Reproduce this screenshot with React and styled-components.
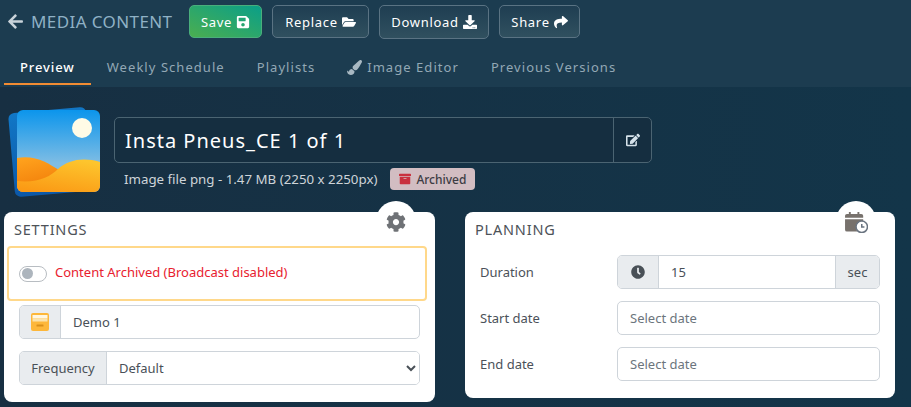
import React from 'react'
import styled, { createGlobalStyle } from 'styled-components'
import {
  FaArrowLeft, FaSave, FaFolderOpen, FaDownload, FaShare, FaPaintBrush,
  FaEdit, FaArchive, FaCog, FaClock,
} from 'react-icons/fa'

const Global = createGlobalStyle`
  html, body { margin: 0; padding: 0; height: 100%; }
  body { font-family: "Noto Sans", "Open Sans", sans-serif; background: #15324a; overflow: hidden; }
  * { box-sizing: border-box; }
`

const Page = styled.div`
  width: 911px;
  height: 407px;
  display: flex;
  flex-direction: column;
  background: linear-gradient(90deg, #172f42 0%, #133549 100%);
`

const Header = styled.header`
  height: 87px;
  flex: none;
  background: #1c3c50;
  display: flex;
  flex-direction: column;
`

const Toolbar = styled.div`
  display: flex;
  align-items: flex-start;
  padding: 5px 0 0 7px;
  height: 39px;
`

const BackTitle = styled.div`
  display: flex;
  align-items: center;
  gap: 7px;
  width: 182px;
  height: 33px;
  color: #8fb1c5;
  font-size: 17px;
  letter-spacing: 0.4px;
  white-space: nowrap;
  svg { color: #c9d3da; font-size: 17px; }
`

const ActionButton = styled.button`
  height: ${p => p.$h || 33}px;
  width: ${p => p.$w}px;
  margin-right: 10px;
  display: flex;
  align-items: center;
  justify-content: center;
  gap: 4px;
  border-radius: 5px;
  border: 1px solid ${p => (p.$primary ? '#4aae7c' : '#5a7383')};
  background: ${p => (p.$primary
    ? 'linear-gradient(to top right, #4bae50, #0a9f88)'
    : 'linear-gradient(180deg, #1f3e52, #30505f)')};
  color: #fff;
  font-family: inherit;
  font-size: 13px;
  font-weight: 400;
  letter-spacing: 0.7px;
  padding: 0;
  svg { font-size: 14px; }
`

const Tabs = styled.nav`
  display: flex;
  margin-top: 11px;
  padding-left: 4px;
`

const Tab = styled.div`
  height: 35px;
  padding: 1px 16px 0;
  display: flex;
  align-items: center;
  gap: 5px;
  color: ${p => (p.$active ? '#fff' : '#93a8b5')};
  font-size: 13px;
  font-weight: ${p => (p.$active ? 500 : 400)};
  letter-spacing: ${p => (p.$active ? 0.9 : 1.05)}px;
  border-bottom: 2px solid ${p => (p.$active ? '#f28c33' : 'transparent')};
  svg { font-size: 15px; color: #a8b8c2; }
`

const Info = styled.section`
  display: flex;
  flex: none;
  padding: 18px 0 0 8px;
  height: 125px;
`

const Thumb = styled.svg`
  width: 94px;
  height: 94px;
  flex: none;
`

const InfoText = styled.div`
  margin: 12px 0 0 12px;
`

const TitleBox = styled.div`
  width: 538px;
  height: 46px;
  display: flex;
  border: 1px solid #4b6472;
  border-radius: 5px;
  background: #152e40;
`

const TitleText = styled.div`
  flex: 1;
  padding-left: 10px;
  display: flex;
  align-items: center;
  color: #fff;
  font-size: 20px;
  letter-spacing: 1px;
`

const TitleEdit = styled.div`
  width: 38px;
  border-left: 1px solid #4b6472;
  display: flex;
  align-items: center;
  justify-content: center;
  color: #d5e2ea;
  font-size: 14px;
`

const Meta = styled.div`
  display: flex;
  align-items: center;
  margin-top: 5px;
  padding-left: 10px;
  color: #ced4d9;
  font-size: 13.3px;
`

const Badge = styled.span`
  margin-left: 13px;
  width: 85px;
  height: 22px;
  display: flex;
  align-items: center;
  justify-content: center;
  gap: 5px;
  background: #d2bdc2;
  border-radius: 4px;
  color: #3c3c44;
  font-size: 12px;
  font-weight: 500;
  svg { color: #c9303e; font-size: 12px; }
`

const Cards = styled.section`
  display: flex;
  align-items: flex-start;
  gap: 30px;
  padding-left: 4px;
`

const Card = styled.div`
  position: relative;
  flex: none;
  width: ${p => p.$w}px;
  height: ${p => p.$h}px;
  background: #fff;
  border-radius: 8px;
  padding: 8px 15px 0;
  color: #474f5a;
`

const CornerBadge = styled.div`
  position: absolute;
  top: -11px;
  right: 19px;
  width: 40px;
  height: 40px;
  padding-top: 2px;
  border-radius: 50%;
  background: #fff;
  display: flex;
  align-items: center;
  justify-content: center;
  color: #6f7276;
  font-size: 20px;
`

const CardTitle = styled.h2`
  margin: 0 0 2px -5px;
  font-size: 14.5px;
  font-weight: 400;
  letter-spacing: 0.8px;
  line-height: 18px;
  color: #4d5258;
`

const Alert = styled.div`
  margin: 8px -7px 4px -12px;
  height: 55px;
  display: flex;
  align-items: center;
  gap: 8px;
  padding-left: 10px;
  border: 2px solid #ffd88a;
  border-radius: 4px;
  color: #e8212f;
  font-size: 13px;
`

const AlertText = styled.span`
  padding-bottom: 3px;
`

const Toggle = styled.span`
  width: 28px;
  height: 16px;
  padding: 2px;
  border: 1px solid #b8bdc2;
  border-radius: 8px;
  background: #fff;
  display: flex;
  align-items: center;
  &::before {
    content: "";
    width: 11px;
    height: 11px;
    border-radius: 50%;
    background: #adb5bd;
  }
`

const Group = styled.div`
  display: flex;
  height: 34px;
  margin-bottom: ${p => p.$mb || 0}px;
  border: 1px solid #ced4da;
  border-radius: 5px;
  overflow: hidden;
  font-size: 13px;
  color: #495057;
`

const Addon = styled.div`
  flex: none;
  width: ${p => p.$w}px;
  display: flex;
  align-items: center;
  justify-content: center;
  background: #e9ecef;
  border-${p => p.$side || 'right'}: 1px solid #ced4da;
  color: #495057;
  font-size: ${p => (p.$icon ? 14 : 13)}px;
`

const Value = styled.div`
  flex: 1;
  display: flex;
  align-items: center;
  padding-left: 12px;
`

const Select = styled.select`
  flex: 1;
  border: 0;
  background: #fff;
  padding-left: 8px;
  color: #495057;
  font-family: inherit;
  font-size: 13px;
  outline: none;
`

const Rows = styled.div`
  display: flex;
  flex-direction: column;
  gap: 12px;
  padding-top: 15px;
`

const Row = styled.div`
  display: flex;
  align-items: center;
`

const RowLabel = styled.label`
  width: 137px;
  flex: none;
  font-size: 13px;
  color: #4b5159;
`

const Field = styled.div`
  flex: 1;
  min-width: 0;
`

const DateInput = styled.input`
  display: block;
  width: 100%;
  height: 34px;
  border: 1px solid #ced4da;
  border-radius: 5px;
  padding: 0 12px;
  font-family: inherit;
  font-size: 13px;
  outline: none;
  &::placeholder { color: #6c757d; opacity: 1; }
`

const StackedImage = () => (
  <Thumb viewBox="0 0 94 94">
    <defs>
      <linearGradient id="sky" x1="0" y1="0" x2="0" y2="1">
        <stop offset="0" stopColor="#0b95ec" />
        <stop offset="0.65" stopColor="#7fbde4" />
      </linearGradient>
      <linearGradient id="back" x1="0" y1="0" x2="0" y2="1">
        <stop offset="0" stopColor="#1177c6" />
        <stop offset="1" stopColor="#0c58a8" />
      </linearGradient>
      <linearGradient id="duneBack" x1="0.3" y1="0" x2="0.6" y2="1">
        <stop offset="0" stopColor="#ffa11c" />
        <stop offset="1" stopColor="#f07a08" />
      </linearGradient>
      <linearGradient id="duneFront" x1="0.7" y1="0" x2="0.3" y2="1">
        <stop offset="0" stopColor="#fdc52d" />
        <stop offset="1" stopColor="#fb9a15" />
      </linearGradient>
      <clipPath id="pic"><rect x="9" y="5" width="83" height="82" rx="6" /></clipPath>
    </defs>
    <rect x="3.5" y="5" width="78" height="84" rx="6" fill="url(#back)" transform="rotate(-5 42 47)" />
    <g clipPath="url(#pic)">
      <rect x="9" y="5" width="83" height="82" fill="url(#sky)" />
      <path d="M9 53 C28 50 40 58 52 66 L52 87 L9 87 Z" fill="url(#duneBack)" />
      <path d="M9 87 L9 76 C30 78 42 72 50 64 C60 55 75 52 92 57 L92 87 Z" fill="url(#duneFront)" />
    </g>
    <circle cx="74" cy="23" r="10" fill="#fffbe6" />
  </Thumb>
)

const CalendarClock = () => (
  <svg width="23" height="21" viewBox="0 0 24 22">
    <path fill="#77716c" d="M4 0h2v3H4zM13 0h2v3h-2zM0 4a2 2 0 0 1 2-2h15a2 2 0 0 1 2 2v2H0zM0 7.5h19v3a6.5 6.5 0 0 0-6 10H2a2 2 0 0 1-2-2z" />
    <circle cx="17.5" cy="15.5" r="6" fill="#fff" stroke="#6a7480" strokeWidth="1.6" />
    <path d="M17.5 12.5v3.2h2.8" fill="none" stroke="#6a7480" strokeWidth="1.6" />
  </svg>
)

const DrawerIcon = () => (
  <svg width="18" height="18" viewBox="0 0 18 18">
    <rect width="18" height="18" rx="2" fill="#fdb73a" />
    <rect x="1.5" y="2" width="15" height="3.5" fill="#fff6e0" />
    <rect x="1.5" y="5.5" width="15" height="3" fill="#fbe3ac" />
    <rect x="5.5" y="11.5" width="7" height="2" rx="0.5" fill="#d98f1a" />
  </svg>
)

export default function App() {
  return (
    <Page>
      <Global />
      <Header>
        <Toolbar>
          <BackTitle><FaArrowLeft /> MEDIA CONTENT</BackTitle>
          <ActionButton $primary $w={73}>Save <FaSave /></ActionButton>
          <ActionButton $w={97}>Replace <FaFolderOpen /></ActionButton>
          <ActionButton $w={110} $h={34}>Download <FaDownload /></ActionButton>
          <ActionButton $w={81}>Share <FaShare /></ActionButton>
        </Toolbar>
        <Tabs>
          <Tab $active>Preview</Tab>
          <Tab>Weekly Schedule</Tab>
          <Tab>Playlists</Tab>
          <Tab><FaPaintBrush /> Image Editor</Tab>
          <Tab>Previous Versions</Tab>
        </Tabs>
      </Header>
      <Info>
        <StackedImage />
        <InfoText>
          <TitleBox>
            <TitleText>Insta Pneus_CE 1 of 1</TitleText>
            <TitleEdit><FaEdit /></TitleEdit>
          </TitleBox>
          <Meta>
            Image file png - 1.47 MB (2250 x 2250px)
            <Badge><FaArchive /> Archived</Badge>
          </Meta>
        </InfoText>
      </Info>
      <Cards>
        <Card $w={431} $h={190}>
          <CornerBadge><FaCog /></CornerBadge>
          <CardTitle>SETTINGS</CardTitle>
          <Alert><Toggle /><AlertText>Content Archived (Broadcast disabled)</AlertText></Alert>
          <Group $mb={12}>
            <Addon $w={41}><DrawerIcon /></Addon>
            <Value>Demo 1</Value>
          </Group>
          <Group>
            <Addon $w={87}>Frequency</Addon>
            <Select defaultValue="Default"><option>Default</option></Select>
          </Group>
        </Card>
        <Card $w={430} $h={186}>
          <CornerBadge><CalendarClock /></CornerBadge>
          <CardTitle>PLANNING</CardTitle>
          <Rows>
            <Row>
              <RowLabel>Duration</RowLabel>
              <Field>
                <Group>
                  <Addon $w={41} $icon><FaClock /></Addon>
                  <Value>15</Value>
                  <Addon $w={44} $side="left">sec</Addon>
                </Group>
              </Field>
            </Row>
            <Row>
              <RowLabel>Start date</RowLabel>
              <Field><DateInput placeholder="Select date" /></Field>
            </Row>
            <Row>
              <RowLabel>End date</RowLabel>
              <Field><DateInput placeholder="Select date" /></Field>
            </Row>
          </Rows>
        </Card>
      </Cards>
    </Page>
  )
}
